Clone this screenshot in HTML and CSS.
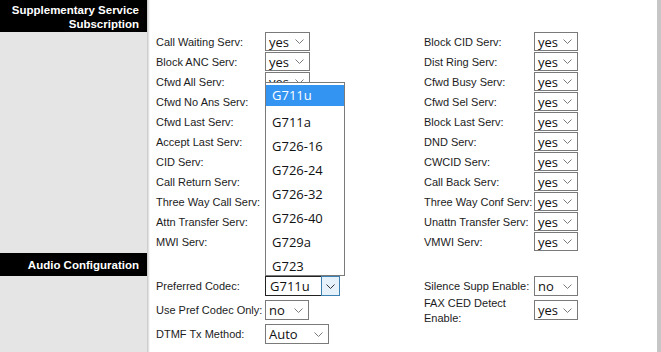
FILE: index.html
```html
<!DOCTYPE html>
<html>
  <head>
    <meta charset="utf-8" />
    <title>Line Settings</title>
    <link rel="stylesheet" href="styles.css">
  </head>
  <body>
    <div class="page">
      <section class="group">
        <h2 class="group__title">Supplementary Service<br />Subscription</h2>
        <div class="fields">
          <label class="field__label">Call Waiting Serv:</label>
          <div class="select"><span>yes</span><svg class="select__chev" width="9" height="5" viewBox="0 0 9 5"><path d="M0.5 0.5 L4.5 4.5 L8.5 0.5" /></svg></div>
          <span></span>
          <label class="field__label">Block CID Serv:</label>
          <div class="select select--right"><span>yes</span><svg class="select__chev" width="9" height="5" viewBox="0 0 9 5"><path d="M0.5 0.5 L4.5 4.5 L8.5 0.5" /></svg></div>

          <label class="field__label">Block ANC Serv:</label>
          <div class="select"><span>yes</span><svg class="select__chev" width="9" height="5" viewBox="0 0 9 5"><path d="M0.5 0.5 L4.5 4.5 L8.5 0.5" /></svg></div>
          <span></span>
          <label class="field__label">Dist Ring Serv:</label>
          <div class="select select--right"><span>yes</span><svg class="select__chev" width="9" height="5" viewBox="0 0 9 5"><path d="M0.5 0.5 L4.5 4.5 L8.5 0.5" /></svg></div>

          <label class="field__label">Cfwd All Serv:</label>
          <div class="select"><span>yes</span><svg class="select__chev" width="9" height="5" viewBox="0 0 9 5"><path d="M0.5 0.5 L4.5 4.5 L8.5 0.5" /></svg></div>
          <span></span>
          <label class="field__label">Cfwd Busy Serv:</label>
          <div class="select select--right"><span>yes</span><svg class="select__chev" width="9" height="5" viewBox="0 0 9 5"><path d="M0.5 0.5 L4.5 4.5 L8.5 0.5" /></svg></div>

          <label class="field__label">Cfwd No Ans Serv:</label>
          <div class="select"><span>yes</span><svg class="select__chev" width="9" height="5" viewBox="0 0 9 5"><path d="M0.5 0.5 L4.5 4.5 L8.5 0.5" /></svg></div>
          <span></span>
          <label class="field__label">Cfwd Sel Serv:</label>
          <div class="select select--right"><span>yes</span><svg class="select__chev" width="9" height="5" viewBox="0 0 9 5"><path d="M0.5 0.5 L4.5 4.5 L8.5 0.5" /></svg></div>

          <label class="field__label">Cfwd Last Serv:</label>
          <div class="select"><span>yes</span><svg class="select__chev" width="9" height="5" viewBox="0 0 9 5"><path d="M0.5 0.5 L4.5 4.5 L8.5 0.5" /></svg></div>
          <span></span>
          <label class="field__label">Block Last Serv:</label>
          <div class="select select--right"><span>yes</span><svg class="select__chev" width="9" height="5" viewBox="0 0 9 5"><path d="M0.5 0.5 L4.5 4.5 L8.5 0.5" /></svg></div>

          <label class="field__label">Accept Last Serv:</label>
          <div class="select"><span>yes</span><svg class="select__chev" width="9" height="5" viewBox="0 0 9 5"><path d="M0.5 0.5 L4.5 4.5 L8.5 0.5" /></svg></div>
          <span></span>
          <label class="field__label">DND Serv:</label>
          <div class="select select--right"><span>yes</span><svg class="select__chev" width="9" height="5" viewBox="0 0 9 5"><path d="M0.5 0.5 L4.5 4.5 L8.5 0.5" /></svg></div>

          <label class="field__label">CID Serv:</label>
          <div class="select"><span>yes</span><svg class="select__chev" width="9" height="5" viewBox="0 0 9 5"><path d="M0.5 0.5 L4.5 4.5 L8.5 0.5" /></svg></div>
          <span></span>
          <label class="field__label">CWCID Serv:</label>
          <div class="select select--right"><span>yes</span><svg class="select__chev" width="9" height="5" viewBox="0 0 9 5"><path d="M0.5 0.5 L4.5 4.5 L8.5 0.5" /></svg></div>

          <label class="field__label">Call Return Serv:</label>
          <div class="select"><span>yes</span><svg class="select__chev" width="9" height="5" viewBox="0 0 9 5"><path d="M0.5 0.5 L4.5 4.5 L8.5 0.5" /></svg></div>
          <span></span>
          <label class="field__label">Call Back Serv:</label>
          <div class="select select--right"><span>yes</span><svg class="select__chev" width="9" height="5" viewBox="0 0 9 5"><path d="M0.5 0.5 L4.5 4.5 L8.5 0.5" /></svg></div>

          <label class="field__label">Three Way Call Serv:</label>
          <div class="select"><span>yes</span><svg class="select__chev" width="9" height="5" viewBox="0 0 9 5"><path d="M0.5 0.5 L4.5 4.5 L8.5 0.5" /></svg></div>
          <span></span>
          <label class="field__label">Three Way Conf Serv:</label>
          <div class="select select--right"><span>yes</span><svg class="select__chev" width="9" height="5" viewBox="0 0 9 5"><path d="M0.5 0.5 L4.5 4.5 L8.5 0.5" /></svg></div>

          <label class="field__label">Attn Transfer Serv:</label>
          <div class="select"><span>yes</span><svg class="select__chev" width="9" height="5" viewBox="0 0 9 5"><path d="M0.5 0.5 L4.5 4.5 L8.5 0.5" /></svg></div>
          <span></span>
          <label class="field__label">Unattn Transfer Serv:</label>
          <div class="select select--right"><span>yes</span><svg class="select__chev" width="9" height="5" viewBox="0 0 9 5"><path d="M0.5 0.5 L4.5 4.5 L8.5 0.5" /></svg></div>

          <label class="field__label">MWI Serv:</label>
          <div class="select"><span>yes</span><svg class="select__chev" width="9" height="5" viewBox="0 0 9 5"><path d="M0.5 0.5 L4.5 4.5 L8.5 0.5" /></svg></div>
          <span></span>
          <label class="field__label">VMWI Serv:</label>
          <div class="select select--right"><span>yes</span><svg class="select__chev" width="9" height="5" viewBox="0 0 9 5"><path d="M0.5 0.5 L4.5 4.5 L8.5 0.5" /></svg></div>
        </div>
      </section>

      <section class="group">
        <h2 class="group__title group__title--single">Audio Configuration</h2>
        <div class="fields fields--loose">
          <label class="field__label">Preferred Codec:</label>
          <div class="select select--codec">
            <span>G711u</span>
            <div class="select__button"><svg class="select__chev" width="9" height="5" viewBox="0 0 9 5"><path d="M0.5 0.5 L4.5 4.5 L8.5 0.5" /></svg></div>
            <ul class="dropdown">
              <li class="dropdown__item dropdown__item--active">G711u</li>
              <li class="dropdown__item">G711a</li>
              <li class="dropdown__item">G726-16</li>
              <li class="dropdown__item">G726-24</li>
              <li class="dropdown__item">G726-32</li>
              <li class="dropdown__item">G726-40</li>
              <li class="dropdown__item">G729a</li>
              <li class="dropdown__item">G723</li>
            </ul>
          </div>
          <span></span>
          <label class="field__label">Silence Supp Enable:</label>
          <div class="select select--right"><span>no</span><svg class="select__chev" width="9" height="5" viewBox="0 0 9 5"><path d="M0.5 0.5 L4.5 4.5 L8.5 0.5" /></svg></div>

          <label class="field__label">Use Pref Codec Only:</label>
          <div class="select select--short"><span>no</span><svg class="select__chev" width="9" height="5" viewBox="0 0 9 5"><path d="M0.5 0.5 L4.5 4.5 L8.5 0.5" /></svg></div>
          <span></span>
          <label class="field__label field__label--wrap">FAX CED Detect<br />Enable:</label>
          <div class="select select--right"><span>yes</span><svg class="select__chev" width="9" height="5" viewBox="0 0 9 5"><path d="M0.5 0.5 L4.5 4.5 L8.5 0.5" /></svg></div>

          <label class="field__label">DTMF Tx Method:</label>
          <div class="select select--wide"><span>Auto</span><svg class="select__chev" width="9" height="5" viewBox="0 0 9 5"><path d="M0.5 0.5 L4.5 4.5 L8.5 0.5" /></svg></div>
        </div>
      </section>
    </div>
  </body>
</html>
```

FILE: styles.css
```css
body {
  margin: 0;
  font-family: "Liberation Sans", Arial, sans-serif;
  font-size: 11px;
  color: #1c1c1c;
  background: #ffffff;
}

.page {
  min-height: 352px;
  border-right: 4px solid #c6c6c6;
  background: linear-gradient(
    90deg,
    #e5e5e5 0 147px,
    #c4c4c4 147px,
    #d8d8d8 148px,
    #eeeeee 149px,
    #ffffff 150px
  );
}

.group__title {
  box-sizing: border-box;
  width: 147px;
  height: 32px;
  margin: 0;
  padding: 3px 8px 0 0;
  background: #000000;
  color: #ffffff;
  font-size: 11.5px;
  font-weight: 700;
  line-height: 14px;
  text-align: right;
}

.group__title--single {
  height: 23px;
  margin-top: 1px;
  padding-top: 5px;
}

.fields {
  display: grid;
  grid-template-columns: 109px 45px 114px 110px 44px;
  grid-auto-rows: 20px;
  padding-left: 156px;
}

.fields--loose {
  row-gap: 4px;
}

.field__label {
  align-self: center;
  white-space: nowrap;
  line-height: 13px;
}

.field__label--wrap {
  line-height: 15px;
  padding-top: 2px;
}

.select {
  position: relative;
  box-sizing: border-box;
  display: flex;
  align-items: center;
  justify-content: space-between;
  width: 45px;
  height: 19px;
  padding: 0 5px 0 3px;
  border: 1px solid #7a7a7a;
  background: #ffffff;
  font-family: "Open Sans", sans-serif;
  font-size: 13px;
  color: #111111;
}

.fields--loose .select {
  height: 20px;
}

.select--right {
  width: 44px;
}

.select--short {
  width: 44px;
}

.select--wide {
  width: 64px;
}

.select__chev {
  flex: none;
}

.select__chev path {
  fill: none;
  stroke: #7a7a7a;
  stroke-width: 1;
}

.select--codec {
  width: 75px;
  padding: 0 0 0 4px;
  border-color: #222222;
}

.select__button {
  box-sizing: border-box;
  display: flex;
  align-items: center;
  justify-content: center;
  align-self: stretch;
  width: 19px;
  margin: -1px -1px -1px 0;
  border: 1px solid #3c7fb1;
  background: #e5f1fb;
}

.select__button path {
  stroke: #333333;
}

/* open list of the codec select, drawn above it */
.dropdown {
  position: absolute;
  left: -1px;
  bottom: 100%;
  box-sizing: border-box;
  width: 80px;
  height: 194px;
  margin: 0 0 1px;
  padding: 1px 0 0;
  overflow: hidden;
  list-style: none;
  border: 1px solid #7a7a7a;
  background: #ffffff;
  font-size: 13px;
  color: #111111;
}

.dropdown__item {
  height: 24px;
  padding-left: 6px;
  line-height: 24px;
}

.dropdown__item--active {
  height: 21px;
  margin: 1px 0 4px;
  line-height: 21px;
  background: #3394f2;
  color: #ffffff;
}
```
